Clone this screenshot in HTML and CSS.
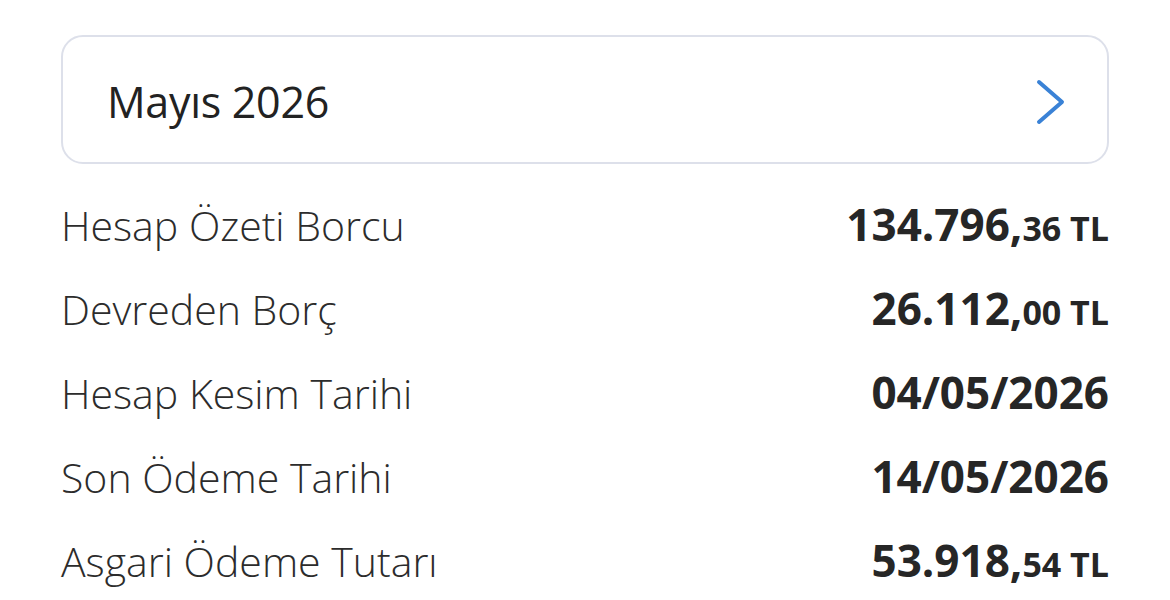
FILE: index.html
```html
<!DOCTYPE html>
<html lang="tr">
<head>
    <meta charset="UTF-8">
    <meta name="viewport" content="width=device-width, initial-scale=1.0">
    <title>Hesap Özeti</title>
    <link rel="stylesheet" href="styles.css">
</head>
<body>
    <div class="statement">
        <div class="period-picker">
            <span class="period-name">Mayıs 2026</span>
            <svg class="chevron" width="30" height="48" viewBox="0 0 30 48">
                <path d="M4 4 L27 24 L4 44" fill="none" stroke="#3a82d6" stroke-width="4" stroke-linecap="round" stroke-linejoin="round"/>
            </svg>
        </div>

        <div class="summary-list">
            <div class="summary-row">
                <span class="label">Hesap Özeti Borcu</span>
                <span class="value">134.796,<small>36 TL</small></span>
            </div>
            <div class="summary-row">
                <span class="label">Devreden Borç</span>
                <span class="value">26.112,<small>00 TL</small></span>
            </div>
            <div class="summary-row">
                <span class="label">Hesap Kesim Tarihi</span>
                <span class="value">04/05/2026</span>
            </div>
            <div class="summary-row">
                <span class="label">Son Ödeme Tarihi</span>
                <span class="value">14/05/2026</span>
            </div>
            <div class="summary-row">
                <span class="label">Asgari Ödeme Tutarı</span>
                <span class="value">53.918,<small>54 TL</small></span>
            </div>
        </div>
    </div>
</body>
</html>
```

FILE: styles.css
```css
* {
    margin: 0;
    padding: 0;
    box-sizing: border-box;
}

body {
    font-family: 'Open Sans', 'Noto Sans', sans-serif;
    background: white;
    color: #262626;
}

.statement {
    width: 1048px;
    margin: 35px 0 0 61px;
}

.period-picker {
    display: flex;
    align-items: center;
    justify-content: space-between;
    height: 129px;
    padding: 4px 42px 0 44px;
    border: 2px solid #dde0ea;
    border-radius: 22px;
}

.period-name {
    font-size: 43px;
    font-weight: 400;
    letter-spacing: -0.3px;
    color: #222;
}

.summary-list {
    margin-top: 30px;
}

.summary-row {
    display: flex;
    justify-content: space-between;
    align-items: baseline;
    height: 84px;
}

.label {
    font-size: 41px;
    font-weight: 300;
    color: #2c2c2c;
}

.value {
    font-size: 44px;
    font-weight: 700;
    color: #262626;
}

.value small {
    font-size: 34px;
}
```
